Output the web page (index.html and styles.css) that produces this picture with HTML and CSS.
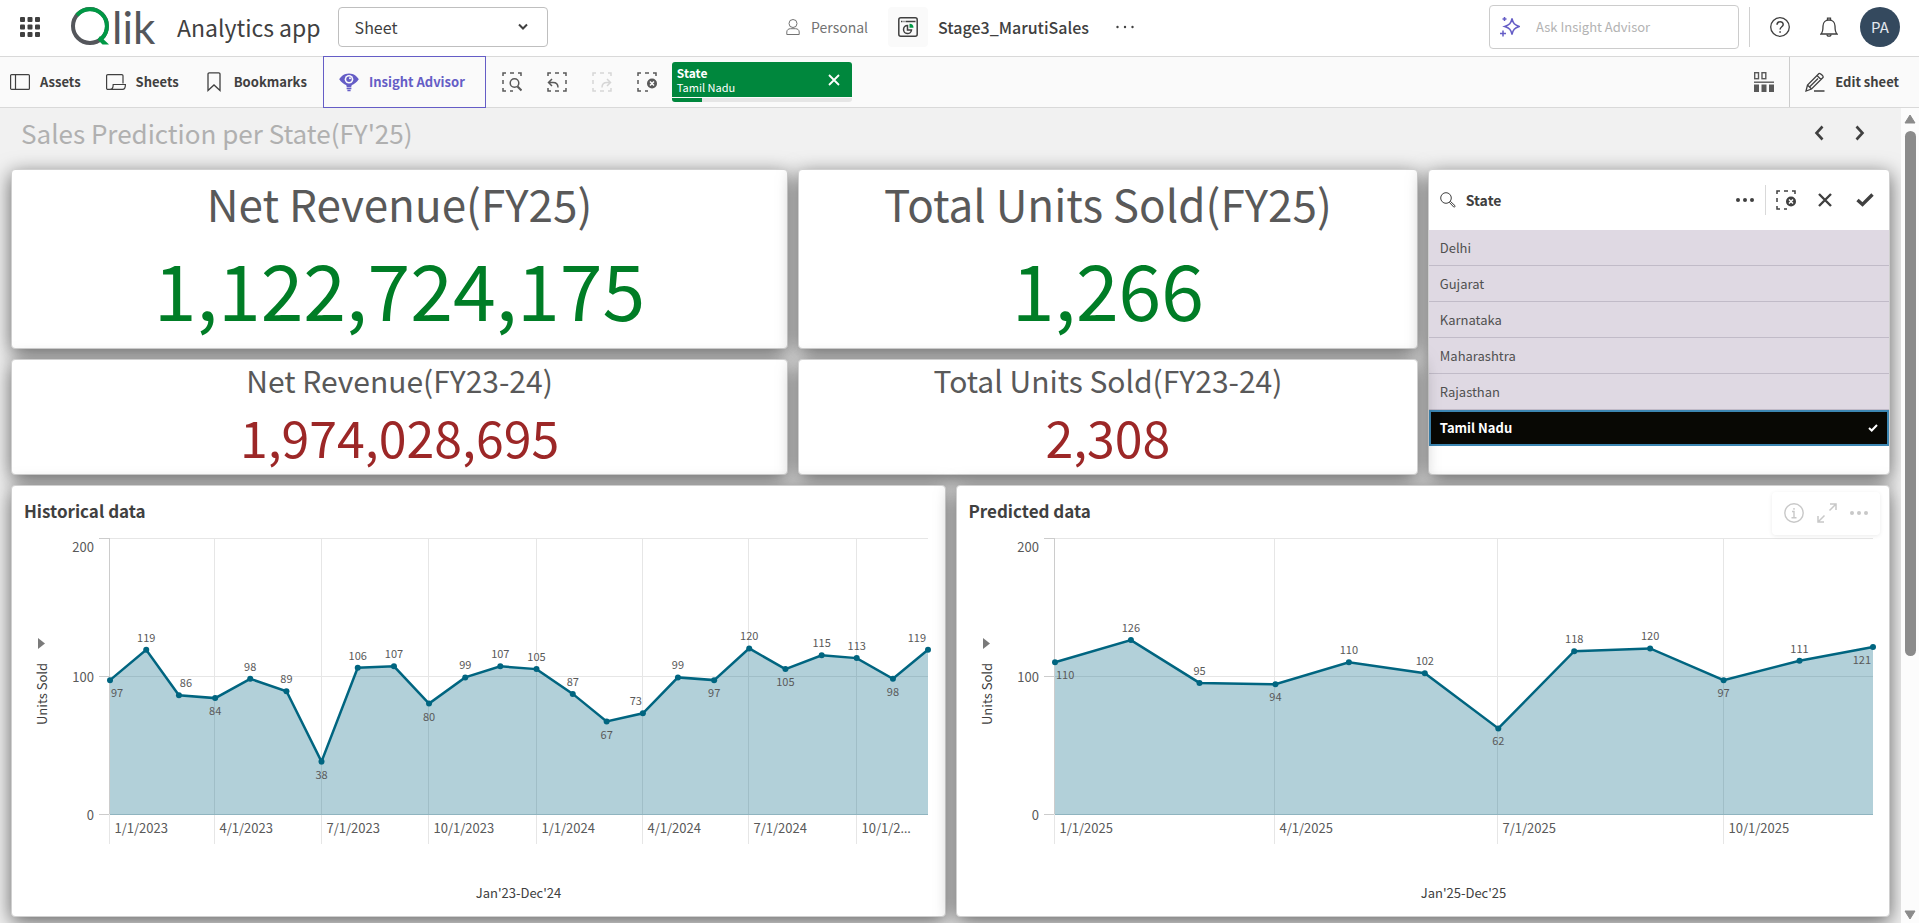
FILE: index.html
```html
<!DOCTYPE html>
<html lang="en">
<head>
<meta charset="utf-8">
<meta name="viewport" content="width=device-width, initial-scale=1">
<title>Stage3_MarutiSales - Analytics app</title>
<link rel="stylesheet" href="styles.css">
</head>
<body>
<svg class="defs" aria-hidden="true">
  <symbol id="i-frame" viewBox="0 0 20 20"><path d="M1 4V1h3M8 1h4M16 1h3v3M1 8v4M1 16v3h3M8 19h3"/></symbol>
  <symbol id="i-clear" viewBox="0 0 20 20"><path d="M1 4V1h3M8 1h4M16 1h3v3M1 8v4M1 16v3h3M8 19h3" fill="none" stroke="currentColor" stroke-width="1.5"/><circle cx="15" cy="11.500" r="5" fill="currentColor"/><path d="M13 9.500l4 4M17 9.500l-4 4" stroke="#fff" stroke-width="1.500"/></symbol>
</svg>

<header class="topbar">
  <div class="topbar-left">
    <button class="icon-btn" aria-label="Launcher">
      <svg width="20" height="20" viewBox="0 0 20 20" fill="#404040"><rect width="5" height="5" rx="1"/><rect x="7.500" width="5" height="5" rx="1"/><rect x="15" width="5" height="5" rx="1"/><rect y="7.500" width="5" height="5" rx="1"/><rect x="7.500" y="7.500" width="5" height="5" rx="1"/><rect x="15" y="7.500" width="5" height="5" rx="1"/><rect y="15" width="5" height="5" rx="1"/><rect x="7.500" y="15" width="5" height="5" rx="1"/><rect x="15" y="15" width="5" height="5" rx="1"/></svg>
    </button>
    <a class="logo" href="#" aria-label="Qlik">
      <svg width="90" height="40" viewBox="0 0 90 40" fill="none">
        <circle cx="19" cy="19" r="17" stroke="#54565b" stroke-width="4"/>
        <path d="M6 8.100A17 17 0 1 1 30.500 31.600" stroke="#009845" stroke-width="4"/>
        <path d="M29 29l9 8.500h-6.500l-5-5z" fill="#009845"/>
        <text class="logo-text" x="41" y="37">lik</text>
      </svg>
    </a>
    <span class="app-name">Analytics app</span>
    <div class="select-wrap">
      <select class="sheet-select" aria-label="View"><option>Sheet</option></select>
      <svg class="select-chevron" width="10" height="8" viewBox="0 0 10 8"><path d="M1 1.500l4 4 4-4" fill="none" stroke="#404040" stroke-width="2"/></svg>
    </div>
  </div>
  <div class="topbar-center">
    <span class="space"><svg width="14" height="16" viewBox="0 0 14 16" fill="none" stroke="#737373"><circle cx="7" cy="4.500" r="4"/><path d="M.8 15.500v-2.500c0-2 1.500-3.300 3.700-3.300h5c2.200 0 3.700 1.300 3.700 3.300v2.500z"/></svg>Personal</span>
    <span class="app-icon"><svg width="20" height="20" viewBox="0 0 20 20" fill="none" stroke="#404040" stroke-width="1.500"><rect x=".8" y=".8" width="18.400" height="18.400" rx="2"/><path d="M3 4.500h1.500M5.500 4.500h1M7.500 4.500h10"/><path d="M9.500 8.500a4 4 0 1 0 4 4.500h-4z"/><path d="M11.500 6.800v4h4a4 4 0 0 0-4-4z" fill="#009845" stroke="none"/></svg></span>
    <span class="app-title">Stage3_MarutiSales</span>
    <button class="icon-btn" aria-label="More app options"><svg width="18" height="4" viewBox="0 0 18 4" fill="#404040"><circle cx="1.500" cy="2" r="1.200"/><circle cx="9" cy="2" r="1.200"/><circle cx="16.500" cy="2" r="1.200"/></svg></button>
  </div>
  <div class="topbar-right">
    <label class="ask">
      <svg width="20" height="20" viewBox="0 0 20 20" fill="none" stroke="#655dc6" stroke-width="1.500"><path d="M12 1.500c1 5 2.500 6.500 7.300 8-4.800 1.500-6.300 3-7.300 8-1-5-2.500-6.500-7.300-8 4.800-1.500 6.300-3 7.300-8z"/><path d="M4.500 0v4M2.500 2h4M3 13.500v6M0 16.500h6"/></svg>
      <input class="ask-input" type="text" placeholder="Ask Insight Advisor" aria-label="Ask Insight Advisor">
    </label>
    <span class="top-divider"></span>
    <button class="icon-btn help" aria-label="Help"><svg width="20" height="20" viewBox="0 0 20 20" fill="none" stroke="#404040"><circle cx="10" cy="10" r="9.300" stroke-width="1.300"/><path d="M7 7.800c0-4 6.200-4 6.200-.3 0 2.200-3.100 2.300-3.100 5" stroke-width="1.500"/><path d="M10.100 14.200v1.600" stroke-width="1.600"/></svg></button>
    <button class="icon-btn bell" aria-label="Notifications"><svg width="18" height="20" viewBox="0 0 18 20" fill="none" stroke="#404040" stroke-width="1.300"><path d="M1 17c2-2 2-4 2-8 0-3.500 2.500-6 6-6s6 2.500 6 6c0 4 0 6 2 8z"/><path d="M7.500 3V1.200h3V3M7 17.500c0 2.200 4 2.200 4 0"/></svg></button>
    <button class="avatar" aria-label="Profile">PA</button>
  </div>
</header>

<nav class="toolbar">
  <button class="tool assets"><svg width="20" height="16" viewBox="0 0 20 16" fill="none" stroke="#404040" stroke-width="1.200"><rect x=".6" y=".6" width="18.800" height="14.800" rx="1"/><path d="M5.500 1v14"/></svg>Assets</button>
  <button class="tool sheets"><svg width="20" height="16" viewBox="0 0 20 16" fill="none" stroke="#404040" stroke-width="1.200"><path d="M17 9.500V1.800a1.200 1.200 0 0 0-1.200-1.200H1.800A1.200 1.200 0 0 0 .6 1.800v12.400a1.200 1.200 0 0 0 1.200 1.200H16.500c1.800 0 2.900-1.400 2.900-4.900H7.200c0 2.500-.5 4.900-3.200 4.900"/></svg>Sheets</button>
  <button class="tool bookmarks"><svg width="14" height="20" viewBox="0 0 14 20" fill="none" stroke="#404040" stroke-width="1.300"><path d="M1 18.500V2.200A1.300 1.300 0 0 1 2.300.8h9.400A1.300 1.300 0 0 1 13 2.200v16.300l-6-5.500z"/></svg>Bookmarks</button>
  <button class="tool insight"><svg width="20" height="20" viewBox="0 0 20 20"><path d="M10 1.500C15 1.500 18 4.500 19.800 7.300 17.500 11 15 12 13 13c-.6.500-.6 1.500-.8 2.200H7.800C7.600 14.500 7.600 13.500 7 13 5 12 2.500 11 .2 7.300 2 4.500 5 1.500 10 1.500z" fill="#655dc6"/><circle cx="10" cy="7.300" r="4.300" fill="#fafafa"/><circle cx="10" cy="7.300" r="2.700" fill="#655dc6"/><circle cx="11" cy="6.300" r="1" fill="#fafafa"/><path d="M7.600 16.500h4.800M8.400 18.500h3.200" stroke="#655dc6" stroke-width="1.300"/></svg>Insight Advisor</button>
  <div class="selection-tools">
    <button class="icon-btn" aria-label="Smart search"><svg width="20" height="20" viewBox="0 0 20 20" fill="none" stroke="#595959" stroke-width="1.500"><use href="#i-frame"/><circle cx="12.500" cy="11" r="4.300" fill="#fafafa"/><path d="M15.500 14.500l4 4" stroke-width="2.200"/></svg></button>
    <button class="icon-btn" aria-label="Step back"><svg width="20" height="20" viewBox="0 0 20 20" fill="none" stroke="#595959" stroke-width="1.500"><path d="M1 4V1h3M8 1h4M16 1h3v3M19 8v4M19 16v3h-3M8 19h4M1 16v3h3"/><path d="M5 7l-3.500 3.500L5 14M1.500 10.500H6c3 0 5 2 5 5"/></svg></button>
    <button class="icon-btn" aria-label="Step forward" disabled><svg width="20" height="20" viewBox="0 0 20 20" fill="none" stroke="#d6d6d6" stroke-width="1.500"><path d="M4 1H1v3M8 1h4M16 1h3v3M1 8v4M19 16v3h-3M8 19h4M1 16v3h3"/><path d="M15 7l3.500 3.500L15 14M18.500 10.500H15c-3 0-5 2-5 5"/></svg></button>
    <button class="icon-btn" aria-label="Clear all selections"><svg class="dim" width="20" height="20"><use href="#i-clear"/></svg></button>
  </div>
  <div class="chip">
    <div class="chip-body">
      <div class="chip-text"><strong class="chip-field">State</strong><span>Tamil Nadu</span></div>
      <button class="icon-btn" aria-label="Clear State selection"><svg width="12" height="12" viewBox="0 0 12 12"><path d="M1 1l10 10M11 1L1 11" stroke="#fff" stroke-width="1.800"/></svg></button>
    </div>
    <div class="chip-bar"><span class="chip-fill"></span></div>
  </div>
  <button class="icon-btn grid-toggle" aria-label="Selections tool"><svg width="20" height="20" viewBox="0 0 20 20" fill="none" stroke="#595959" stroke-width="1.400"><rect x=".7" y=".7" width="3.800" height="6"/><rect x="8" y=".7" width="3.800" height="6"/><path d="M0 10.200h20"/><path d="M0 12.500h5V20H0zM7.500 12.500h5V20h-5zM15 12.500h5V20h-5z" fill="#595959" stroke="none"/></svg></button>
  <button class="tool edit"><svg width="20" height="20" viewBox="0 0 20 20" fill="none" stroke="#404040" stroke-width="1.300"><path d="M1 19l1.500-6L14 1.500c1-1 5 3 4 4L6.500 17zM12 3.500l4 4M2.500 13l4 4M13 6.500L5 14.500M9 19h10.500"/></svg>Edit sheet</button>
</nav>

<div class="workspace">
  <main class="sheet">
    <div class="sheet-head">
      <h1 class="sheet-title">Sales Prediction per State(FY'25)</h1>
      <div class="pager">
        <button class="icon-btn" aria-label="Previous sheet"><svg width="10" height="16" viewBox="0 0 10 16"><path d="M8.500 1.500L2.500 8l6 6.500" fill="none" stroke="#404040" stroke-width="2.600"/></svg></button>
        <button class="icon-btn" aria-label="Next sheet"><svg width="10" height="16" viewBox="0 0 10 16"><path d="M1.500 1.500l6 6.500-6 6.500" fill="none" stroke="#404040" stroke-width="2.600"/></svg></button>
      </div>
    </div>
    <div class="board">
      <section class="card kpi kpi-large wide">
        <h2 class="kpi-title">Net Revenue(FY25)</h2><p class="kpi-value good">1,122,724,175</p>
      </section>
      <section class="card kpi kpi-large medium">
        <h2 class="kpi-title">Total Units Sold(FY25)</h2><p class="kpi-value good">1,266</p>
      </section>
      <section class="card filter">
        <div class="filter-head">
          <svg width="16" height="16" viewBox="0 0 16 16" fill="none" stroke="#404040"><circle cx="6" cy="6" r="5.300"/><path d="M9.500 10.500l1-1 4.500 4.200c.5.700-.6 1.800-1.300 1.300z"/></svg>
          <h2 class="filter-name">State</h2>
          <div class="filter-actions">
            <button class="icon-btn" aria-label="Menu"><svg width="18" height="4" viewBox="0 0 18 4" fill="#404040"><circle cx="2" cy="2" r="2"/><circle cx="9" cy="2" r="2"/><circle cx="16" cy="2" r="2"/></svg></button>
            <span class="filter-divider"></span>
            <button class="icon-btn clear" aria-label="Clear selection"><svg width="20" height="20"><use href="#i-clear"/></svg></button>
            <button class="icon-btn cancel" aria-label="Cancel selection"><svg width="14" height="14" viewBox="0 0 14 14"><path d="M1 1l12 12M13 1L1 13" stroke="#404040" stroke-width="2.400"/></svg></button>
            <button class="icon-btn" aria-label="Confirm selection"><svg width="18" height="14" viewBox="0 0 18 14"><path d="M1.500 7l5 4.500 10-10" fill="none" stroke="#404040" stroke-width="3.400"/></svg></button>
          </div>
        </div>
        <ul class="filter-list">
          <li class="option">Delhi</li>
          <li class="option">Gujarat</li>
          <li class="option">Karnataka</li>
          <li class="option">Maharashtra</li>
          <li class="option">Rajasthan</li>
          <li class="option selected">Tamil Nadu<svg width="10" height="8" viewBox="0 0 10 8"><path d="M1 4l2.700 2.500L9 1" fill="none" stroke="#fff" stroke-width="2"/></svg></li>
        </ul>
      </section>
      <section class="card kpi kpi-small wide">
        <h2 class="kpi-title">Net Revenue(FY23-24)</h2><p class="kpi-value bad">1,974,028,695</p>
      </section>
      <section class="card kpi kpi-small medium">
        <h2 class="kpi-title">Total Units Sold(FY23-24)</h2><p class="kpi-value bad">2,308</p>
      </section>
      <section class="card chart-card">
        <h2 class="chart-title">Historical data</h2>
        <div class="chart" id="historical"></div>
      </section>
      <section class="card chart-card">
        <h2 class="chart-title">Predicted data</h2>
        <div class="chart" id="predicted"></div>
        <div class="hover-menu">
          <button class="icon-btn" aria-label="Details"><svg width="20" height="20" viewBox="0 0 20 20" fill="none" stroke="#c8c8c8" stroke-width="1.400"><circle cx="10" cy="10" r="9.200"/><path d="M8 8.500h2v6M7.500 14.700h5M10 5v1.800"/></svg></button>
          <button class="icon-btn" aria-label="Full screen"><svg width="20" height="20" viewBox="0 0 20 20" fill="none" stroke="#c8c8c8" stroke-width="1.500"><path d="M12.500 7.500l6.500-6.500M13 1h6v6M7.500 12.500L1 19M1 13v6h6"/></svg></button>
          <button class="icon-btn" aria-label="More"><svg width="18" height="4" viewBox="0 0 18 4" fill="#c8c8c8"><circle cx="2" cy="2" r="2"/><circle cx="9" cy="2" r="2"/><circle cx="16" cy="2" r="2"/></svg></button>
        </div>
      </section>
    </div>
  </main>
  <div class="scrollbar" aria-hidden="true">
    <svg width="12" height="10" viewBox="0 0 12 10"><path d="M6 1l5 8H1z" fill="#8b8b8b" stroke="#8b8b8b" stroke-linejoin="round"/></svg>
    <div class="track"><div class="thumb"></div></div>
    <svg width="12" height="10" viewBox="0 0 12 10"><path d="M6 9l5-8H1z" fill="#8b8b8b" stroke="#8b8b8b" stroke-linejoin="round"/></svg>
  </div>
</div>
<script src="charts.js"></script>
</body>
</html>
```
FILE: styles.css
```css
* { box-sizing: border-box; }

body {
  margin: 0;
  min-height: 100vh;
  display: flex;
  flex-direction: column;
  background: #f1f1f1;
  color: #404040;
  font-family: "Noto Sans CJK SC", "Noto Sans", sans-serif;
  font-size: 13px;
  line-height: 20px;
  overflow-x: hidden;
}

h1, h2, p, ul { margin: 0; padding: 0; font-weight: 400; list-style: none; }
button, input, select { font: inherit; color: inherit; }
button { border: 0; padding: 0; background: none; }
svg { display: block; flex: none; }
.defs { position: absolute; width: 0; height: 0; }

.icon-btn { display: flex; align-items: center; justify-content: center; flex: none; }

/* Top bar */
.topbar {
  display: grid;
  grid-template-columns: 1fr auto 1fr;
  align-items: center;
  height: 57px;
  padding: 0 19px 2px 20px;
  background: #fff;
  border-bottom: 1px solid #d9d9d9;
}
.topbar-left, .topbar-center, .topbar-right, .space { display: flex; align-items: center; }
.topbar-right { justify-content: flex-end; }
.logo { margin-left: 31px; }
.logo svg { overflow: visible; }
.logo-text { font-family: Lato, sans-serif; font-size: 44px; fill: #54565b; }
.app-name { margin-left: 16px; font-size: 23px; line-height: 32px; white-space: nowrap; }
.select-wrap { position: relative; margin-left: 17px; }
.sheet-select {
  width: 210px;
  height: 40px;
  padding: 0 16px;
  appearance: none;
  background: #fff;
  border: 1px solid #bfbfbf;
  border-radius: 4px;
  font-size: 16px;
}
.select-chevron { position: absolute; right: 20px; top: 16px; pointer-events: none; }
.space { gap: 11px; font-size: 14px; color: #737373; }
.app-icon {
  display: flex;
  align-items: center;
  justify-content: center;
  width: 40px;
  height: 40px;
  margin: 0 10px 0 20px;
  background: #fafafa;
  border-radius: 4px;
}
.app-title { margin-right: 27px; font-size: 16px; font-weight: 500; }
.ask {
  display: flex;
  align-items: center;
  width: 250px;
  height: 44px;
  padding: 0 10px;
  gap: 16px;
  border: 1px solid #ccc;
  border-radius: 4px;
}
.ask-input { flex: 1; min-width: 0; padding: 0; border: 0; outline: 0; background: none; font-size: 13px; }
.ask-input::placeholder { color: #b3b3b3; opacity: 1; }
.top-divider { width: 1px; height: 40px; margin: 0 20px 0 10px; background: #d0d0d0; }
.bell { margin: 0 22px 0 30px; }
.avatar {
  width: 40px;
  height: 40px;
  border-radius: 50%;
  background: #34495e;
  color: #e3e8ee;
  font-size: 15px;
}

/* Toolbar */
.toolbar {
  display: flex;
  align-items: center;
  height: 51px;
  background: #fafafa;
  border-bottom: 1px solid #d9d9d9;
}
.tool { display: flex; align-items: center; gap: 10px; flex: none; font-weight: 700; white-space: nowrap; }
.assets { margin-left: 10px; }
.sheets { margin-left: 25px; }
.bookmarks { margin-left: 28px; gap: 13px; }
.insight {
  align-self: stretch;
  margin: -1px 0 -1px 16px;
  padding: 0 20px 0 15px;
  border: 1px solid #655dc6;
  color: #655dc6;
}
.selection-tools { display: flex; gap: 25px; margin-left: 16px; }
.dim { color: #595959; }
.chip { width: 180px; margin-left: 15px; color: #fff; }
.chip-body {
  display: flex;
  align-items: center;
  justify-content: space-between;
  height: 35px;
  padding: 0 12px 0 5px;
  background: #00873d;
  border-radius: 3px 3px 0 0;
  font-size: 11px;
  line-height: 15px;
}
.chip-text { display: flex; flex-direction: column; }
.chip-field { font-size: 12px; font-weight: 700; }
.chip-bar { height: 4px; margin-top: 1px; background: #e6e6e6; border-radius: 0 0 3px 3px; overflow: hidden; }
.chip-fill { display: block; width: 17%; height: 100%; background: #00873d; }
.grid-toggle { margin: 0 15px 0 auto; }
.edit { align-self: stretch; padding: 0 20px 0 15px; border-left: 1px solid #ccc; }

/* Sheet */
.workspace { flex: 1; display: flex; min-height: 0; }
.sheet { flex: 1; min-width: 0; display: flex; flex-direction: column; padding: 0 11px 6px; overflow: hidden; }
.sheet-head { display: flex; align-items: center; justify-content: space-between; height: 61px; padding: 0 25px 12px 10px; }
.sheet-title { font-size: 26px; line-height: 40px; color: #b0b0b0; }
.pager { display: flex; gap: 31px; }
.board {
  flex: 1;
  display: grid;
  grid-template-columns: repeat(24, minmax(0, 1fr));
  grid-template-rows: repeat(12, minmax(52px, 1fr));
  gap: 10px;
}
.card {
  position: relative;
  min-height: 0;
  background: #fff;
  border: 1px solid #d0d0d0;
  border-radius: 4px;
  box-shadow: 0 5px 20px rgba(0, 0, 0, 0.6);
}

.kpi { display: flex; flex-direction: column; justify-content: center; padding-top: 2px; text-align: center; white-space: nowrap; }
.kpi-title { color: #595959; }
.good { color: #007d26; }
.bad { color: #9c2727; }
.wide { grid-column: span 10; }
.medium { grid-column: span 8; }
.kpi-large { grid-row: span 3; }
.kpi-large .kpi-title { font-size: 44px; line-height: 57px; }
.kpi-large .kpi-value { font-size: 77px; line-height: 112px; }
.kpi-small { grid-row: span 2; }
.kpi-small .kpi-title { font-size: 30px; line-height: 37px; }
.kpi-small .kpi-value { font-size: 50px; line-height: 74px; }

.filter { grid-column: span 6; grid-row: span 5; }
.filter-head { display: flex; align-items: center; height: 60px; padding: 0 15px 0 11px; gap: 10px; }
.filter-name { font-size: 14px; font-weight: 700; }
.filter-actions { display: flex; align-items: center; margin-left: auto; }
.filter-divider { width: 1px; height: 30px; margin: 0 10px 0 11px; background: #d9d9d9; }
.cancel { margin: 0 24px 0 22px; }
.option {
  display: flex;
  align-items: center;
  justify-content: space-between;
  height: 36px;
  padding: 0 11px;
  background: #dfd9e3;
  border-bottom: 1px solid #c1bbc8;
  color: #505050;
}
.option.selected {
  padding: 0 9px;
  background: #080804;
  border: 2px solid #3c86b2;
  color: #fff;
  font-weight: 700;
}

.chart-card { grid-column: span 12; grid-row: span 7; display: flex; flex-direction: column; }
.chart-title { height: 43px; padding: 13px 12px 0; font-size: 17px; line-height: 24px; font-weight: 700; }
.chart { flex: 1; min-height: 0; overflow: hidden; }
.hover-menu {
  position: absolute;
  top: 6px;
  right: 9px;
  display: flex;
  align-items: center;
  gap: 13px;
  height: 43px;
  padding: 0 12px;
  background: #fff;
  border-radius: 4px;
  box-shadow: 0 1px 4px rgba(0, 0, 0, 0.08);
}

.plot text { font-size: 13px; fill: #595959; }
.plot .axis-title { fill: #404040; }
.plot .value { font-size: 11px; }
.ellipsis { font-family: "Noto Sans", sans-serif; }
.grid-line { stroke: #e6e6e6; stroke-width: 1; }
.axis-line { stroke: #ccc; stroke-width: 1; }
.area { fill: #006580; fill-opacity: 0.3; }
.base-line { stroke: #8fb4bf; stroke-width: 1; }
.series { fill: none; stroke: #006580; stroke-width: 2.5; }
.dot { fill: #006580; }
.arrow { fill: #7a7a7a; }

/* Scrollbar */
.scrollbar {
  display: flex;
  flex-direction: column;
  align-items: center;
  gap: 7px;
  width: 18px;
  padding: 6px 0 3px;
  background: #fcfcfc;
}
.track { flex: 1; width: 11px; }
.thumb { height: 68%; border-radius: 6px; background: #8b8b8b; }
```
FILE: charts.js
```js
// Area charts of units sold per month on a time axis.
// A label position is t (above), b (below), tr/tl (above right/left), br/bl (below right/left).
const charts = [
  {
    id: 'historical', year: 2023, caption: "Jan'23-Dec'24",
    points: [[97, 'br'], [119, 't'], [86, 'tr'], [84, 'b'], [98, 't'], [89, 't'], [38, 'b'], [106, 't'],
      [107, 't'], [80, 'b'], [99, 't'], [107, 't'], [105, 't'], [87, 't'], [67, 'b'], [73, 'tl'],
      [99, 't'], [97, 'b'], [120, 't'], [105, 'b'], [115, 't'], [113, 't'], [98, 'b'], [119, 'tle']]
  },
  {
    id: 'predicted', year: 2025, caption: "Jan'25-Dec'25",
    points: [[110, 'br'], [126, 't'], [95, 't'], [94, 'b'], [110, 't'], [102, 't'], [62, 'b'],
      [118, 't'], [120, 't'], [97, 'b'], [111, 't'], [121, 'bl']]
  }
];

function draw(chart) {
  const host = document.getElementById(chart.id);
  const w = host.clientWidth, h = host.clientHeight;
  const left = 97, right = w - 17, top = 9, bottom = h - 102;
  const day = m => Date.UTC(chart.year, m, 1) / 864e5;
  const last = chart.points.length - 1;
  const x = m => left + 1 + (day(m) - day(0)) / (day(last) - day(0)) * (right - left - 1);
  const y = v => bottom - v / 200 * (bottom - top);
  const line = (x1, y1, x2, y2, c) => `<line class="${c}" x1="${x1}" y1="${y1}" x2="${x2}" y2="${y2}"/>`;
  let s = '';

  for (const v of [200, 100]) s += line(left, Math.round(y(v)) + 0.5, right, Math.round(y(v)) + 0.5, 'grid-line');
  for (const v of [200, 100, 0]) {
    const ty = Math.round(y(v)) + 0.5;
    s += line(left - 10, ty, left, ty, 'axis-line');
    s += `<text x="${left - 15}" y="${ty + (v === 200 ? 13 : 5)}" text-anchor="end">${v}</text>`;
  }
  for (let m = 0; m <= last; m += 3) {
    const gx = Math.round(x(m)) - 0.5;
    s += line(gx, top, gx, bottom + 30, 'grid-line');
    const full = `${m % 12 + 1}/1/${chart.year + Math.floor(m / 12)}`;
    const label = right - gx < 75 ? full.slice(0, -3) + '<tspan class="ellipsis">…</tspan>' : full;
    s += `<text x="${gx + 5}" y="${bottom + 19}">${label}</text>`;
  }
  s += line(left + 0.5, top, left + 0.5, bottom, 'axis-line');

  const path = chart.points.map(([v], m) => `${x(m).toFixed(1)},${y(v).toFixed(1)}`);
  s += `<polygon class="area" points="${x(0)},${bottom} ${path.join(' ')} ${right},${bottom}"/>`;
  s += line(left + 1, bottom + 0.5, right, bottom + 0.5, 'base-line');
  s += `<polyline class="series" points="${path.join(' ')}"/>`;
  chart.points.forEach(([v, pos], m) => {
    const px = x(m), py = y(v);
    s += `<circle class="dot" cx="${px}" cy="${py}" r="3"/>`;
    const ty = pos[0] === 't' ? py - 8 : py + 17;
    let tx = px, anchor = 'middle';
    if (pos === 'tr') tx = px + 7;
    if (pos === 'tl') tx = px - 7;
    if (pos === 'br') { tx = px + 1; anchor = 'start'; }
    if (pos === 'bl' || pos === 'tle') { tx = px - 2; anchor = 'end'; }
    s += `<text class="value" x="${tx}" y="${ty}" text-anchor="${anchor}">${v}</text>`;
  });

  const mid = (top + bottom) / 2;
  s += `<text class="axis-title" x="${(left + right) / 2}" y="${h - 18}" text-anchor="middle">${chart.caption}</text>`;
  s += `<text class="axis-title" transform="translate(35 ${mid + 18}) rotate(-90)" text-anchor="middle">Units Sold</text>`;
  s += `<path class="arrow" d="M26 ${mid - 38}v11l7-5.500z"/>`;
  host.innerHTML = `<svg class="plot" width="${w}" height="${h}" role="img" aria-label="Units sold, ${chart.caption}">${s}</svg>`;
}

function drawAll() { charts.forEach(draw); }
drawAll();
window.addEventListener('resize', drawAll);
```
